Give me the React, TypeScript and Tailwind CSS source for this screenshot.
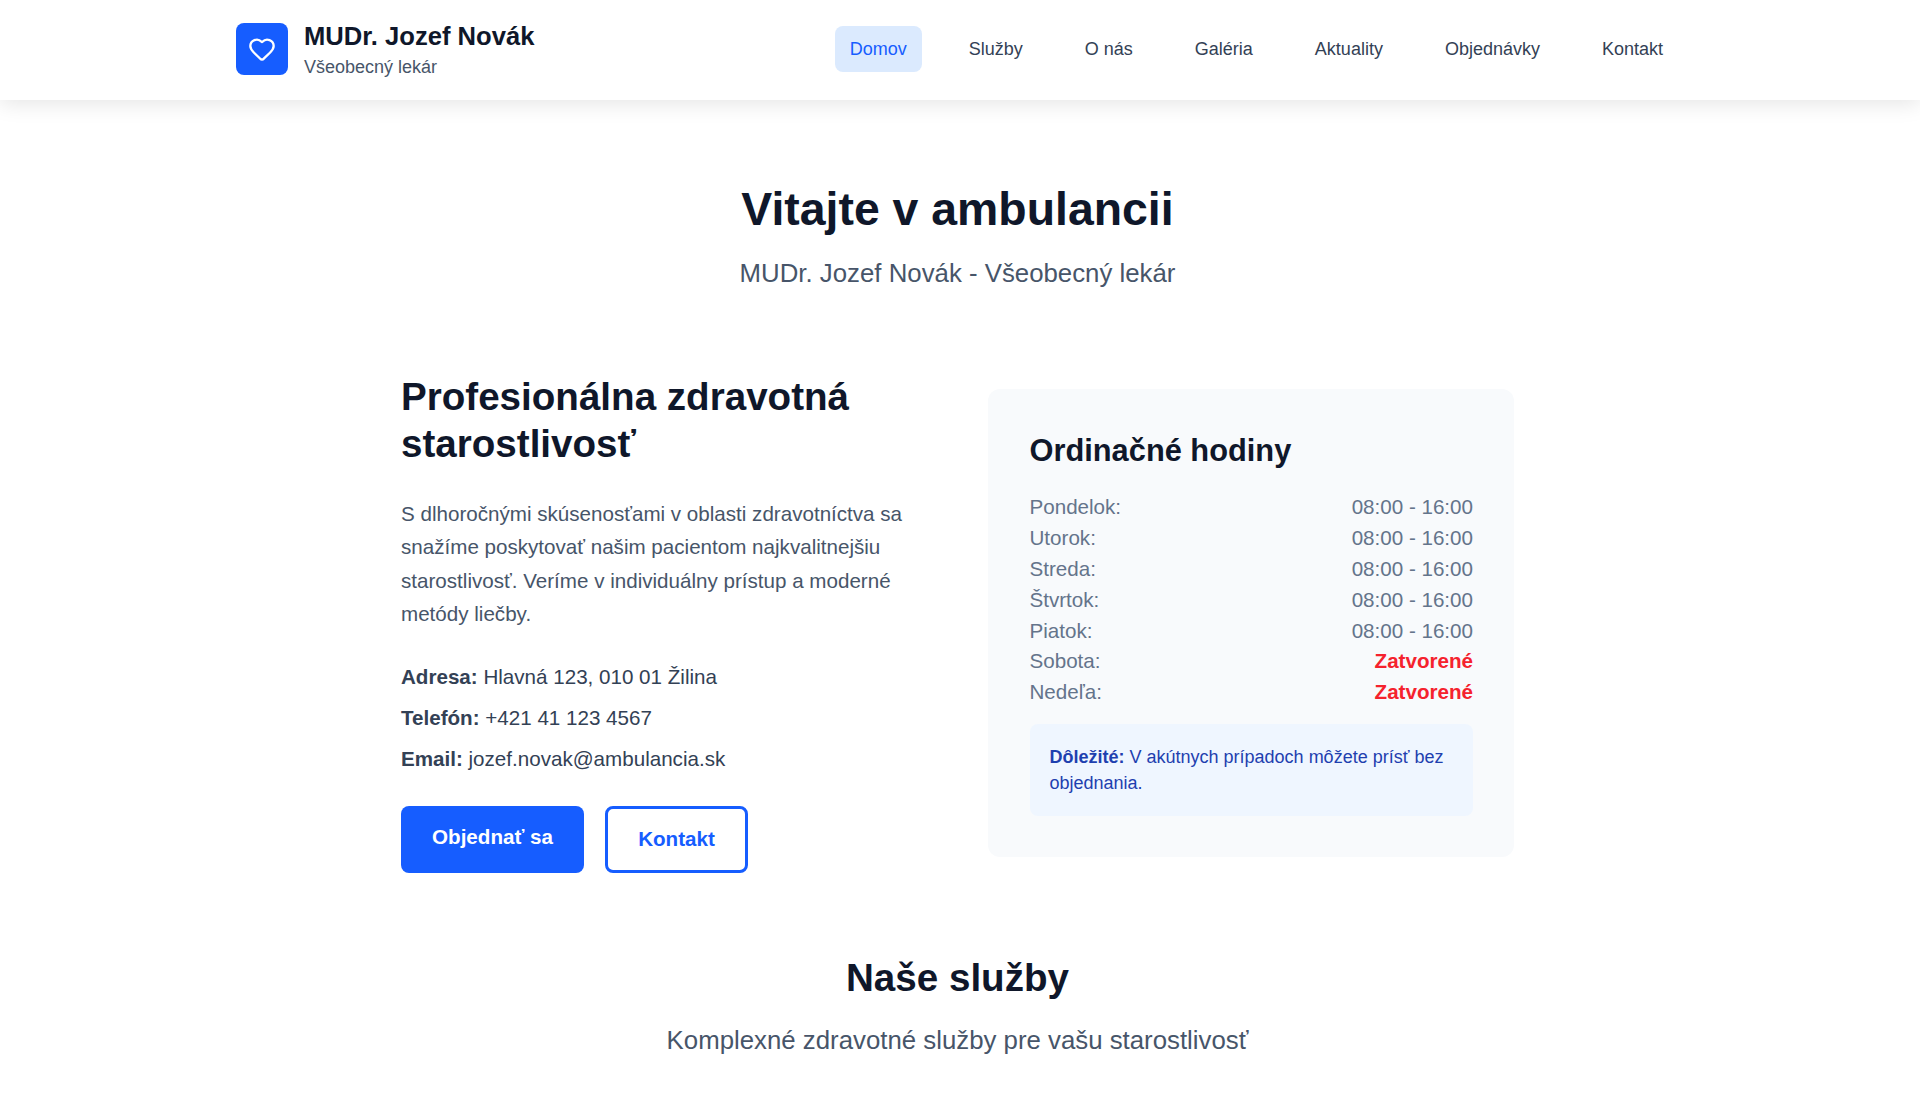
import React from 'react';
import { Heart } from 'lucide-react';

const navItems = ['Domov', 'Služby', 'O nás', 'Galéria', 'Aktuality', 'Objednávky', 'Kontakt'];

const hours = [
  { day: 'Pondelok:', time: '08:00 - 16:00' },
  { day: 'Utorok:', time: '08:00 - 16:00' },
  { day: 'Streda:', time: '08:00 - 16:00' },
  { day: 'Štvrtok:', time: '08:00 - 16:00' },
  { day: 'Piatok:', time: '08:00 - 16:00' },
  { day: 'Sobota:', time: 'Zatvorené', closed: true },
  { day: 'Nedeľa:', time: 'Zatvorené', closed: true },
];

const App: React.FC = () => {
  return (
    <div className="h-[1097px] overflow-hidden bg-white font-['Liberation_Sans',sans-serif]">
      <header className="h-[100px] bg-white shadow-[0_4px_20px_rgba(0,0,0,0.1)]">
        <div className="flex h-full items-center justify-between pb-[2px] pl-[236px] pr-[242px]">
          <div className="flex items-center gap-4">
            <div className="flex h-[52px] w-[52px] items-center justify-center rounded-lg bg-[#165dff]">
              <Heart className="h-7 w-7 text-white" strokeWidth={2} />
            </div>
            <div className="pt-[2px]">
              <div className="text-[25.6px] leading-7 font-bold text-[#0f172a]">MUDr. Jozef Novák</div>
              <div className="mt-[5px] text-lg leading-6 text-[#475569]">Všeobecný lekár</div>
            </div>
          </div>
          <nav className="flex items-center gap-8">
            {navItems.map((item, index) => (
              <a
                key={item}
                className={`rounded-lg px-[15px] py-[11px] text-lg leading-6 ${
                  index === 0 ? 'bg-[#dbeafe] text-[#165dff]' : 'text-[#334155]'
                }`}
              >
                {item}
              </a>
            ))}
          </nav>
        </div>
      </header>

      <main className="ml-[401px] w-[1113px]">
        <section className="pt-[84px] text-center">
          <h1 className="text-[46.4px] leading-[50px] font-bold text-[#0f172a]">Vitajte v ambulancii</h1>
          <p className="mt-[23px] text-[25.8px] leading-8 text-[#475569]">MUDr. Jozef Novák - Všeobecný lekár</p>
        </section>

        <section className="mt-[83.5px] flex items-start justify-between">
          <div className="w-[520px]">
            <h2 className="text-[38.6px] leading-[47px] font-bold text-[#0f172a]">Profesionálna zdravotná starostlivosť</h2>
            <p className="mt-[30px] text-[20.6px] leading-[33.6px] text-[#475569]">
              S dlhoročnými skúsenosťami v oblasti zdravotníctva sa snažíme poskytovať našim pacientom najkvalitnejšiu
              starostlivosť. Veríme v individuálny prístup a moderné metódy liečby.
            </p>
            <div className="mt-[32.5px] flex flex-col gap-[13px] text-[20.6px] leading-7 text-[#334155]">
              <p><strong>Adresa:</strong> Hlavná 123, 010 01 Žilina</p>
              <p><strong>Telefón:</strong> +421 41 123 4567</p>
              <p><strong>Email:</strong> jozef.novak@ambulancia.sk</p>
            </div>
            <div className="mt-[32.5px] flex items-center gap-[21px]">
              <button className="h-[67px] w-[183px] rounded-lg bg-[#165dff] pb-1 text-[20.6px] font-bold text-white">Objednať sa</button>
              <button className="h-[67px] w-[143px] rounded-lg border-[3px] border-[#165dff] text-[20.6px] font-bold text-[#165dff]">Kontakt</button>
            </div>
          </div>

          <div className="mt-[16.5px] w-[526px] rounded-xl bg-[#f8fafc] pt-[43.5px] pr-[41px] pb-[41.5px] pl-[41.5px]">
            <h3 className="text-[30.8px] leading-9 font-bold text-[#0f172a]">Ordinačné hodiny</h3>
            <div className="mt-6 flex flex-col">
              {hours.map((row) => (
                <div key={row.day} className="flex h-[30.8px] items-center justify-between text-[20.6px] text-[#64748b]">
                  <span>{row.day}</span>
                  <span className={row.closed ? 'font-bold text-[#f5222d]' : ''}>{row.time}</span>
                </div>
              ))}
            </div>
            <div className="mt-[15.5px] rounded-lg bg-[#eff6ff] px-5 py-5 text-lg leading-[26px] text-[#1e40af]">
              <strong>Dôležité:</strong> V akútnych prípadoch môžete prísť bez objednania.
            </div>
          </div>
        </section>

        <section className="mt-[81px] text-center">
          <h2 className="text-[38.6px] leading-[48px] font-bold text-[#0f172a]">Naše služby</h2>
          <p className="mt-[22px] text-[25.8px] leading-8 text-[#475569]">Komplexné zdravotné služby pre vašu starostlivosť</p>
        </section>
      </main>
    </div>
  );
};

export default App;
